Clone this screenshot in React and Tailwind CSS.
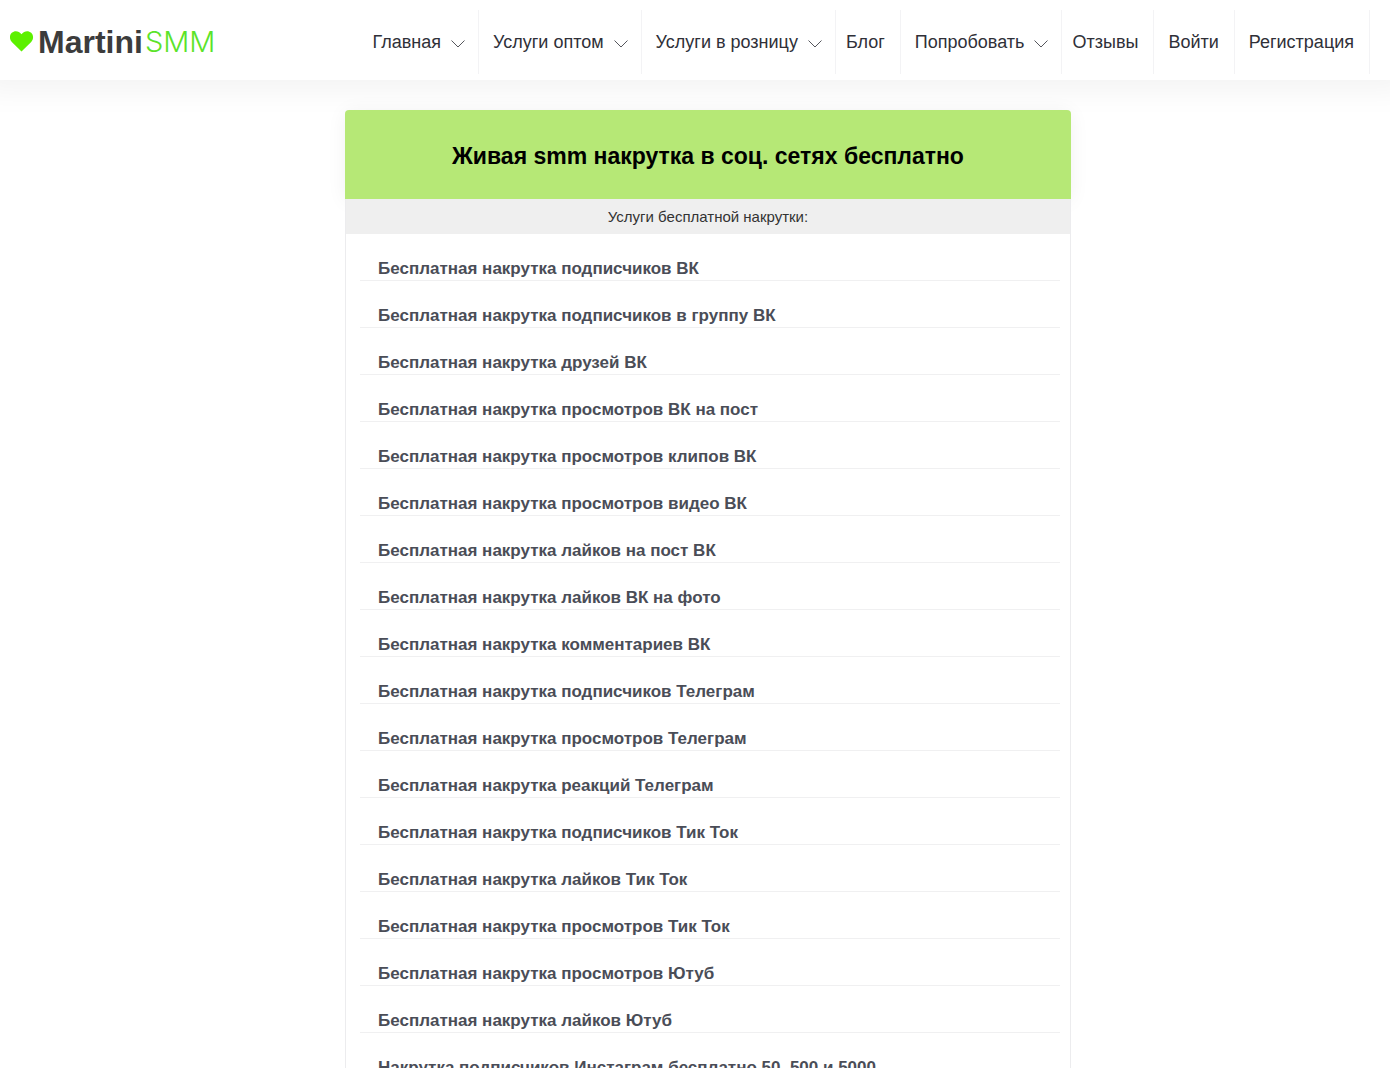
const menu = [
  { title: 'Главная', dropdown: true },
  { title: 'Услуги оптом', dropdown: true },
  { title: 'Услуги в розницу', dropdown: true },
  { title: 'Блог', tight: true },
  { title: 'Попробовать', dropdown: true },
  { title: 'Отзывы', tight: true },
  { title: 'Войти' },
  { title: 'Регистрация' },
];

const services = [
  'Бесплатная накрутка подписчиков ВК',
  'Бесплатная накрутка подписчиков в группу ВК',
  'Бесплатная накрутка друзей ВК',
  'Бесплатная накрутка просмотров ВК на пост',
  'Бесплатная накрутка просмотров клипов ВК',
  'Бесплатная накрутка просмотров видео ВК',
  'Бесплатная накрутка лайков на пост ВК',
  'Бесплатная накрутка лайков ВК на фото',
  'Бесплатная накрутка комментариев ВК',
  'Бесплатная накрутка подписчиков Телеграм',
  'Бесплатная накрутка просмотров Телеграм',
  'Бесплатная накрутка реакций Телеграм',
  'Бесплатная накрутка подписчиков Тик Ток',
  'Бесплатная накрутка лайков Тик Ток',
  'Бесплатная накрутка просмотров Тик Ток',
  'Бесплатная накрутка просмотров Ютуб',
  'Бесплатная накрутка лайков Ютуб',
  'Накрутка подписчиков Инстаграм бесплатно 50, 500 и 5000',
];

function Chevron() {
  return (
    <svg width="14" height="8" viewBox="0 0 14 8" fill="none" aria-hidden="true" className="mt-1 shrink-0">
      <path d="M0.5 0.5L7 7L13.5 0.5" stroke="#55565c" strokeWidth="1" />
    </svg>
  );
}

function Logo() {
  return (
    <a href="#" className="flex items-center pt-1 whitespace-nowrap">
      <svg width="24" height="21" viewBox="0 0 24 21" aria-hidden="true" className="mr-1 mb-0.5 shrink-0">
        <path
          fill="#5cf000"
          d="M11.500 20.500 1.800 11C-.8 8.400-.6 4 1.800 1.800 4.500-.6 8.800-.3 11.500 3.200 14.200-.3 18.500-.6 21.200 1.800 23.600 4 23.800 8.400 21.200 11Z"
        />
      </svg>
      <span className="text-[32px] leading-9 font-bold text-[#3c3c3c]">Martini</span>
      <span className="ml-0.5 font-[Inter] text-[29px] leading-9 font-light text-[#5be32a]">SMM</span>
    </a>
  );
}

function MenuItem({ title, dropdown, tight }) {
  return (
    <li className="flex border-r border-[#f3f3f5]">
      <a
        href="#"
        className={`flex items-center gap-2.5 whitespace-nowrap ${tight ? 'pl-2.5' : 'pl-3.5'} ${dropdown ? 'pr-[13px]' : 'pr-[15px]'}`}
      >
        {title}
        {dropdown && <Chevron />}
      </a>
    </li>
  );
}

export default function App() {
  return (
    <div className="min-h-screen bg-white font-['Liberation_Sans',Arial,sans-serif]">
      <header className="flex h-20 items-center justify-between bg-white pr-5 pl-2.5 shadow-[0_-10px_30px_20px_rgba(0,0,0,0.05)]">
        <Logo />
        <nav className="pt-1">
          <ul className="flex h-16 text-lg text-[#2f3038]">
            {menu.map((item) => (
              <MenuItem key={item.title} {...item} />
            ))}
          </ul>
        </nav>
      </header>

      <main className="flex justify-center pt-[30px] pl-[26px]">
        <section className="w-full max-w-[726px]">
          <div className="rounded-t bg-[#b6e876] px-5 pt-[30px] pb-[27px] shadow-[0_2px_20px_rgba(0,0,0,0.06)]">
            <h1 className="text-center text-[23px] leading-8 font-bold text-black">
              Живая smm накрутка в соц. сетях бесплатно
            </h1>
          </div>
          <div className="relative border-x border-[#ececee] bg-white">
            <p className="bg-[#efefef] py-2 text-center text-[15px] leading-[19px] text-[#333]">
              Услуги бесплатной накрутки:
            </p>
            <ul className="pr-2.5 pl-3.5">
              {services.map((name) => (
                <li key={name} className="border-b border-[#f0f0f1] pt-6 pl-[18px]">
                  <a href="#" className="block text-[17px] leading-[22px] font-bold text-[#4a4d57]">
                    {name}
                  </a>
                </li>
              ))}
            </ul>
          </div>
        </section>
      </main>
    </div>
  );
}
